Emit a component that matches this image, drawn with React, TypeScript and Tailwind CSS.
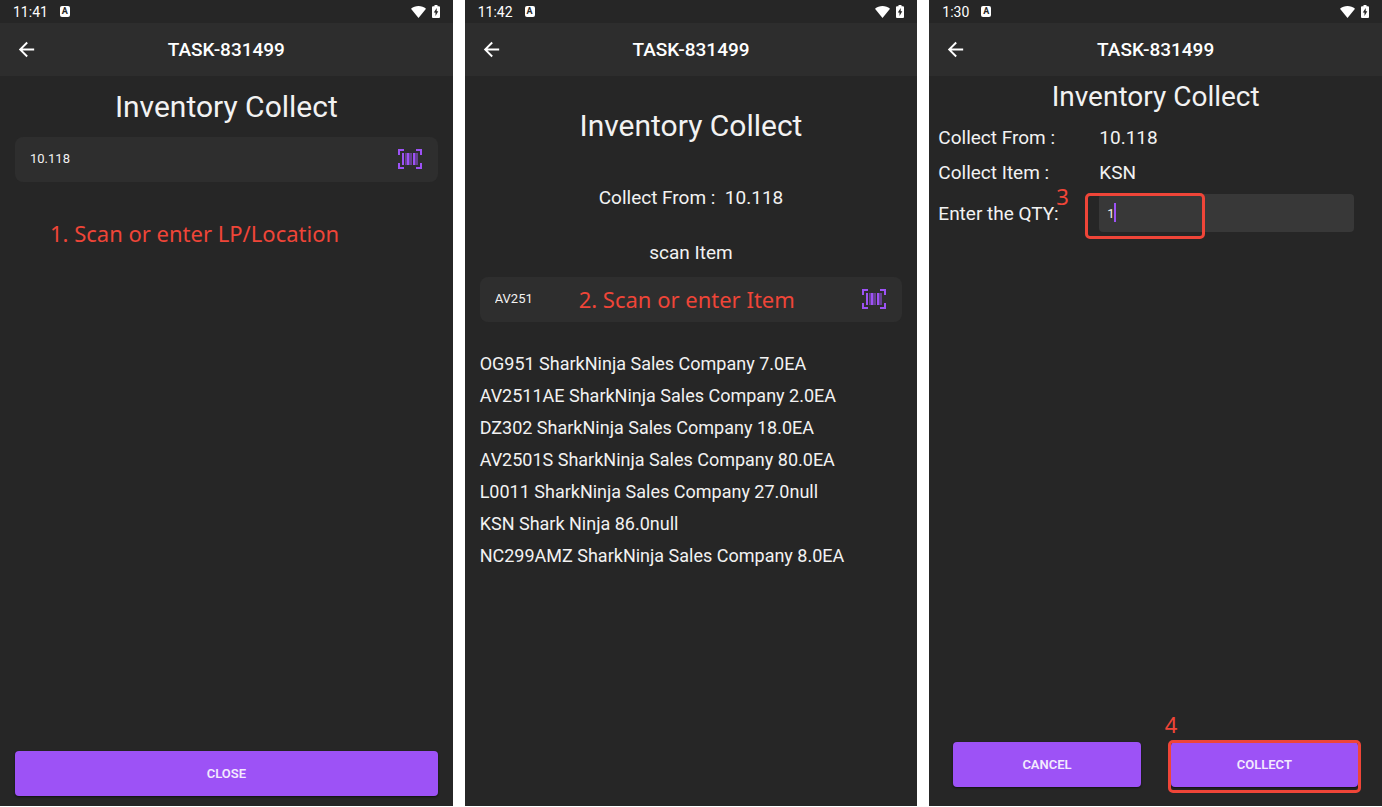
import React from 'react';
import { MdArrowBack } from 'react-icons/md';

const items = [
  'OG951 SharkNinja Sales Company 7.0EA',
  'AV2511AE SharkNinja Sales Company 2.0EA',
  'DZ302 SharkNinja Sales Company 18.0EA',
  'AV2501S SharkNinja Sales Company 80.0EA',
  'L0011 SharkNinja Sales Company 27.0null',
  'KSN Shark Ninja 86.0null',
  'NC299AMZ SharkNinja Sales Company 8.0EA',
];

function BarcodeIcon() {
  return (
    <svg width="24" height="20" viewBox="0 0 24 20" fill="none" aria-hidden="true">
      <path
        d="M6 1H1v5M18 1h5v5M6 19H1v-5M18 19h5v-5"
        stroke="#9d52f6"
        strokeWidth="2"
      />
      <path d="M4 4h2v12H4zM9 4h2v12H9zM15 4h2v12h-2z" fill="#9d52f6" />
      <path d="M7 4h1v12H7zM8 4h1v12H8zM11 4h3v12h-3zM17 4h3v12h-3z" fill="#9d52f6" opacity="0.5" />
    </svg>
  );
}

function StatusBar({ time }: { time: string }) {
  return (
    <div className="flex h-[23px] items-center pr-[13px] pl-[13px] text-white">
      <span className="text-[14px] leading-5">{time}</span>
      <span className="ml-3 flex h-[11px] w-[10px] items-center justify-center rounded-[2px] bg-white text-[9px] leading-none font-bold text-[#262626]">
        A
      </span>
      <svg className="ml-auto" width="15" height="12" viewBox="0 0 15 12" fill="white" aria-hidden="true">
        <path d="M0 2.8C4 -.8 11 -.8 15 2.8L7.500 12z" />
      </svg>
      <svg className="ml-[6px]" width="8" height="13" viewBox="0 0 8 13" aria-hidden="true">
        <path d="M2.500 0h3v1.200H7q1 0 1 1V12q0 1-1 1H1q-1 0-1-1V2.200q0-1 1-1h1.500z" fill="white" />
        <path d="M4.700 3L1.800 7.500h1.700v3.500L6.300 6.300H4.700z" fill="#262626" />
      </svg>
    </div>
  );
}

function Header() {
  return (
    <header className="relative flex h-[53px] items-center justify-center bg-[#2d2d2d] text-white">
      <button type="button" aria-label="Back" className="absolute left-[15px]">
        <MdArrowBack className="h-[23px] w-[23px]" />
      </button>
      <h1 className="text-[19px] leading-6 font-medium">TASK-831499</h1>
    </header>
  );
}

function Screen({ time, children }: { time: string; children: React.ReactNode }) {
  return (
    <section className="flex flex-col bg-[#262626] text-[#f2f2f2]">
      <StatusBar time={time} />
      <Header />
      {children}
    </section>
  );
}

function ScanField({ label, value, note }: { label: string; value: string; note?: string }) {
  return (
    <div className="relative flex h-[45px] items-center rounded-lg bg-[#2e2e2e] pr-4 pb-[2px]">
      <input
        aria-label={label}
        defaultValue={value}
        className="h-full min-w-0 flex-1 bg-transparent pl-[15px] text-[13px] outline-none"
      />
      <button type="button" aria-label="Scan barcode">
        <BarcodeIcon />
      </button>
      {note && <Note className="absolute left-[99px]">{note}</Note>}
    </div>
  );
}

function Note({ className, children }: { className: string; children: React.ReactNode }) {
  return (
    <p className={`${className} font-['Noto_Sans','Open_Sans',sans-serif] text-[22px] leading-6 whitespace-nowrap text-[#ef4538]`}>
      {children}
    </p>
  );
}

function ActionButton({ children }: { children: React.ReactNode }) {
  return (
    <button
      type="button"
      className="h-[45px] w-full rounded bg-[#9d52f6] text-[13px] font-semibold text-[#f3eafe] shadow-[0_1px_2px_#111111]">
      {children}
    </button>
  );
}

export default function App() {
  return (
    <main className="grid min-h-screen grid-cols-3 gap-3 bg-white pb-px font-['Roboto',sans-serif]">
      <Screen time="11:41">
        <div className="flex flex-1 flex-col px-[15px] pt-3 pb-[10px]">
          <h2 className="mb-[11px] text-center text-[30px] leading-[38px]">Inventory Collect</h2>
          <ScanField label="LP or location" value="10.118" />
          <Note className="mt-[39px] ml-[35px]">1. Scan or enter LP/Location</Note>
          <div className="mt-auto">
            <ActionButton>CLOSE</ActionButton>
          </div>
        </div>
      </Screen>

      <Screen time="11:42">
        <div className="flex flex-1 flex-col px-[15px] pt-[31px]">
          <h2 className="text-center text-[30px] leading-[38px]">Inventory Collect</h2>
          <p className="mt-[41px] text-center text-[19px] leading-6 whitespace-pre">Collect From :  10.118</p>
          <p className="mt-[31px] mb-3 text-center text-[19px] leading-6">scan Item</p>
          <ScanField label="Item" value="AV251" note="2. Scan or enter Item" />
          <ul className="mt-[26px] text-[18px] leading-8">
            {items.map((item) => (
              <li key={item}>{item}</li>
            ))}
          </ul>
        </div>
      </Screen>

      <Screen time="1:30">
        <div className="flex flex-1 flex-col pt-[2px] pb-[19px]">
          <h2 className="text-center text-[28px] leading-[38px]">Inventory Collect</h2>
          <div className="mt-1 grid grid-cols-[161px_1fr] items-center pr-7 pl-[9px] text-[19px] leading-[35px]">
            <span>Collect From :</span>
            <span>10.118</span>
            <span>Collect Item :</span>
            <span>KSN</span>
            <div className="relative mt-1">
              <label htmlFor="qty">Enter the QTY:</label>
              <Note className="absolute -top-3 left-[118px]">3</Note>
            </div>
            <div className="relative mt-1 flex h-[38px]">
              <input
                id="qty"
                defaultValue="1"
                className="w-full rounded bg-[#383838] px-2 text-[13px] outline-none"
              />
              <span className="absolute top-[9px] left-[15px] h-[19px] w-[2px] bg-[#9d52f6]" />
              <span className="absolute -top-px -left-[14px] h-[46px] w-[120px] rounded-[5px] border-[3px] border-[#ef4538]" />
            </div>
          </div>
          <div className="mt-auto grid grid-cols-2 gap-[30px] px-6">
            <ActionButton>CANCEL</ActionButton>
            <div className="relative">
              <ActionButton>COLLECT</ActionButton>
              <span className="absolute -inset-x-[3px] -top-[2px] -bottom-[6px] rounded-[5px] border-[3px] border-[#ef4538]" />
              <Note className="absolute bottom-full -left-[6px] mb-[6px]">4</Note>
            </div>
          </div>
        </div>
      </Screen>
    </main>
  );
}
